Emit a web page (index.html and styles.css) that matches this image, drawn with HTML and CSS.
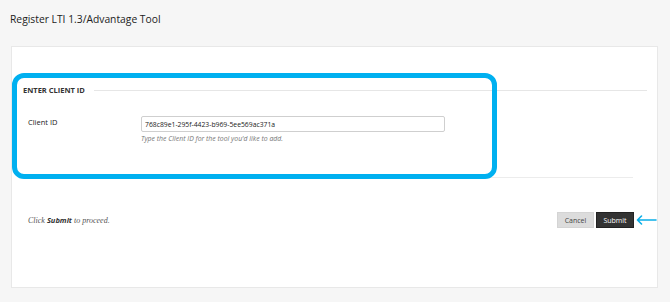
FILE: index.html
```html
<!DOCTYPE html>
<html lang="en">
    <head>
        <meta charset="UTF-8">
        <meta name="viewport" content="width=device-width, initial-scale=1.0">
        <title>Register LTI 1.3/Advantage Tool</title>
        <link rel="stylesheet" href="styles.css">
    </head>
    <body>
        <h1 class="page-title">Register LTI 1.3/Advantage Tool</h1>

        <div class="panel">
            <div class="highlight"></div>

            <div class="step">
                <div class="step-head">
                    <h2>Enter Client ID</h2>
                    <span class="rule"></span>
                </div>
                <div class="field">
                    <label for="clientId">Client ID</label>
                    <div class="field-input">
                        <input id="clientId" type="text" value="768c89e1-295f-4423-b969-5ee569ac371a">
                        <p class="hint">Type the Client ID for the tool you'd like to add.</p>
                    </div>
                </div>
            </div>

            <div class="submit-row">
                <p class="proceed">Click <b>Submit</b> to proceed.</p>
                <div class="buttons">
                    <button class="btn cancel">Cancel</button>
                    <button class="btn submit">Submit</button>
                    <svg class="arrow" width="21" height="10" viewBox="0 0 21 10">
                        <path d="M20 5H1.5M5.5 1L1.5 5l4 4" fill="none" stroke="#0aaee8" stroke-width="1.6" stroke-linecap="round" stroke-linejoin="round"/>
                    </svg>
                </div>
            </div>
        </div>
    </body>
</html>
```

FILE: styles.css
```css
* {
    box-sizing: border-box;
    font-family: "Open Sans", sans-serif;
}

body {
    margin: 0;
    background: #f6f6f6;
    color: #222;
}

.page-title {
    margin: 0;
    padding: 12px 10px 0;
    height: 46px;
    font-size: 10.3px;
    font-weight: normal;
}

.panel {
    position: relative;
    margin: 0 12px 0 11px;
    height: 242px;
    background: white;
    border: 1px solid #e8e8e8;
    padding: 38px 10px 0 11px;
}

/* blue callout drawn over the first step */
.highlight {
    position: absolute;
    left: 0;
    top: 26px;
    width: 485px;
    height: 106px;
    border: 5px solid #00b0f0;
    border-radius: 12px;
}

.step {
    border-bottom: 1px solid #ececec;
    margin-right: 14px;
    height: 93px;
}

.step-head {
    display: flex;
    align-items: center;
    gap: 9px;
    margin-right: -14px;
}
.step-head h2 {
    margin: 0;
    font-size: 7.5px;
    font-weight: bold;
    text-transform: uppercase;
    color: #333;
}
.step-head .rule {
    flex: 1;
    border-top: 1px solid #e6e6e6;
}

.field {
    display: grid;
    grid-template-columns: 113px 304px;
    margin: 21px 0 0 5px;
}
.field label {
    font-size: 7.5px;
    padding-top: 1px;
}
.field input {
    display: block;
    width: 100%;
    height: 16px;
    border: 1px solid #cfcfcf;
    border-radius: 2px;
    padding: 0 3px;
    font-size: 6.8px;
    color: #222;
}
.hint {
    margin: 2px 0 0;
    font-size: 6.9px;
    font-style: italic;
    color: #777;
}

.submit-row {
    display: flex;
    justify-content: space-between;
    align-items: center;
    margin-top: 34px;
}
.proceed {
    margin: 0 0 0 5px;
    font-family: "Liberation Serif", serif;
    font-style: italic;
    font-size: 8px;
    color: #555;
}
.proceed b {
    font-family: "Open Sans", sans-serif;
    font-size: 7.5px;
    color: #333;
}

.buttons {
    display: flex;
    align-items: center;
    gap: 2px;
    margin-right: -10px;
}
.btn {
    height: 16px;
    padding: 0;
    font-size: 7px;
    border: 1px solid #d4d4d4;
}
.cancel {
    width: 37px;
    background: #dcdcdc;
    color: #444;
}
.submit {
    width: 38px;
    background: #333;
    border-color: #222;
    color: white;
}
```
